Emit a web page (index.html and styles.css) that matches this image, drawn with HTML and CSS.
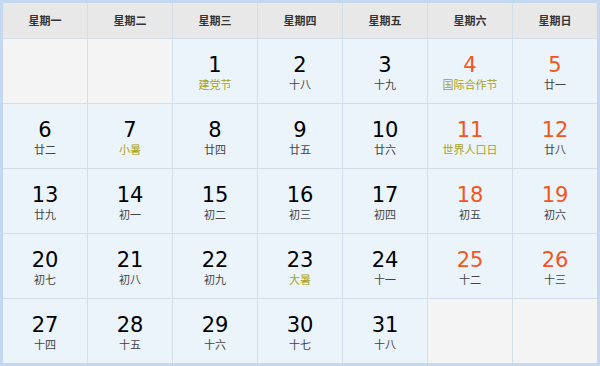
FILE: index.html
```html
<!DOCTYPE html>
<html lang="zh-CN">
<head>
<meta charset="utf-8">
<link rel="stylesheet" href="styles.css">
</head>
<body>
<div class="cal">
  <div class="hd">星期一</div><div class="hd">星期二</div><div class="hd">星期三</div><div class="hd">星期四</div><div class="hd">星期五</div><div class="hd">星期六</div><div class="hd">星期日</div>

  <div class="day empty"></div>
  <div class="day empty"></div>
  <div class="day"><span class="num">1</span><span class="lunar fest">建党节</span></div>
  <div class="day"><span class="num">2</span><span class="lunar">十八</span></div>
  <div class="day"><span class="num">3</span><span class="lunar">十九</span></div>
  <div class="day wk"><span class="num">4</span><span class="lunar fest">国际合作节</span></div>
  <div class="day wk"><span class="num">5</span><span class="lunar">廿一</span></div>

  <div class="day"><span class="num">6</span><span class="lunar">廿二</span></div>
  <div class="day"><span class="num">7</span><span class="lunar fest">小暑</span></div>
  <div class="day"><span class="num">8</span><span class="lunar">廿四</span></div>
  <div class="day"><span class="num">9</span><span class="lunar">廿五</span></div>
  <div class="day"><span class="num">10</span><span class="lunar">廿六</span></div>
  <div class="day wk"><span class="num">11</span><span class="lunar fest">世界人口日</span></div>
  <div class="day wk"><span class="num">12</span><span class="lunar">廿八</span></div>

  <div class="day"><span class="num">13</span><span class="lunar">廿九</span></div>
  <div class="day"><span class="num">14</span><span class="lunar">初一</span></div>
  <div class="day"><span class="num">15</span><span class="lunar">初二</span></div>
  <div class="day"><span class="num">16</span><span class="lunar">初三</span></div>
  <div class="day"><span class="num">17</span><span class="lunar">初四</span></div>
  <div class="day wk"><span class="num">18</span><span class="lunar">初五</span></div>
  <div class="day wk"><span class="num">19</span><span class="lunar">初六</span></div>

  <div class="day"><span class="num">20</span><span class="lunar">初七</span></div>
  <div class="day"><span class="num">21</span><span class="lunar">初八</span></div>
  <div class="day"><span class="num">22</span><span class="lunar">初九</span></div>
  <div class="day"><span class="num">23</span><span class="lunar fest">大暑</span></div>
  <div class="day"><span class="num">24</span><span class="lunar">十一</span></div>
  <div class="day wk"><span class="num">25</span><span class="lunar">十二</span></div>
  <div class="day wk"><span class="num">26</span><span class="lunar">十三</span></div>

  <div class="day"><span class="num">27</span><span class="lunar">十四</span></div>
  <div class="day"><span class="num">28</span><span class="lunar">十五</span></div>
  <div class="day"><span class="num">29</span><span class="lunar">十六</span></div>
  <div class="day"><span class="num">30</span><span class="lunar">十七</span></div>
  <div class="day"><span class="num">31</span><span class="lunar">十八</span></div>
  <div class="day empty"></div>
  <div class="day empty"></div>
</div>
</body>
</html>
```
FILE: styles.css
```css
html, body {
  margin: 0;
  padding: 0;
  background: #ffffff;
}
.cal {
  width: 600px;
  height: 366px;
  box-sizing: border-box;
  border: 3px solid #c4d8f2;
  background: #d3deeb;
  display: grid;
  grid-template-columns: repeat(7, 1fr);
  grid-template-rows: 35px repeat(5, 64px);
  gap: 1px;
  font-family: "Noto Sans CJK SC", "DejaVu Sans", sans-serif;
}
.hd {
  background: #e8e8e8;
  color: #333333;
  font-size: 11px;
  font-weight: bold;
  display: flex;
  align-items: center;
  justify-content: center;
  padding-bottom: 1px;
}
.day {
  background: #ebf3fb;
  display: flex;
  flex-direction: column;
  align-items: center;
  padding-top: 14px;
  box-sizing: border-box;
}
.day.empty {
  background: #f4f4f4;
}
.num {
  font-family: "DejaVu Sans", sans-serif;
  font-size: 21px;
  line-height: 25px;
  color: #000000;
}
.wk .num {
  color: #f2561d;
}
.lunar {
  font-size: 11px;
  line-height: 14px;
  margin-top: -1px;
  color: #444444;
}
.lunar.fest {
  color: #a9a317;
}
```
